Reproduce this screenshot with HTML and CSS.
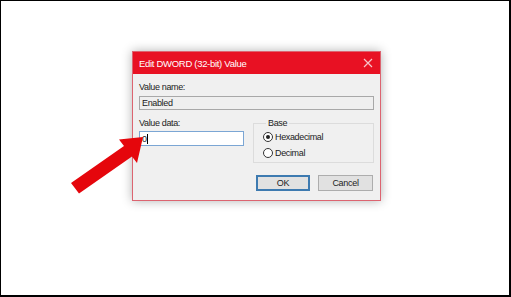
FILE: index.html
```html
<!DOCTYPE html>
<html>

<head>
    <title>Edit DWORD</title>
    <link rel="stylesheet" href="styles.css">
</head>

<body>
    <div id="frame">
        <div class="dialog">
            <div class="titleBar">
                <span class="title">Edit DWORD (32-bit) Value</span>
                <svg class="closeIcon" width="10" height="10" viewBox="0 0 10 10">
                    <path d="M1 1 L9 9 M9 1 L1 9" stroke="#f7c4c9" stroke-width="1.2" fill="none" />
                </svg>
            </div>
            <div class="dialogBody">
                <div class="label">Value name:</div>
                <div class="field readonly">Enabled</div>
                <div class="row">
                    <div class="dataCol">
                        <div class="label">Value data:</div>
                        <div class="field active">0<span class="caret"></span></div>
                    </div>
                    <fieldset class="baseGroup">
                        <legend>Base</legend>
                        <div class="radioRow"><span class="radio on"></span>Hexadecimal</div>
                        <div class="radioRow"><span class="radio"></span>Decimal</div>
                    </fieldset>
                </div>
                <div class="buttons">
                    <button class="btn default">OK</button>
                    <button class="btn">Cancel</button>
                </div>
            </div>
        </div>

        <!-- red pointer over the dialog -->
        <svg class="arrow" width="511" height="297" viewBox="0 0 511 297">
            <polygon points="143,137 119,139.5 124,146.1 71,183 79,193.5 132,156.4 137,163" fill="#e5060c" />
        </svg>
    </div>
</body>

</html>
```

FILE: styles.css
```css
body {
    margin: 0;
    padding: 0;
    background: #fff;
    font-family: "Liberation Sans", Arial, sans-serif;
}

#frame {
    position: relative;
    width: 511px;
    height: 297px;
    box-sizing: border-box;
    border-style: solid;
    border-color: #000;
    border-width: 1px 2px 2px 1px;
    padding: 50px 0 0 131px;
}

.dialog {
    width: 249px;
    box-sizing: border-box;
    border: 1px solid #dc6470;
    background: #f0f0f0;
    box-shadow: 0 0 10px rgba(0, 0, 0, 0.3);
}

.titleBar {
    height: 22px;
    background: #e81123;
    display: flex;
    align-items: center;
    justify-content: space-between;
    padding: 0 7px 0 6px;
}

.title {
    color: #fff;
    font-size: 9.5px;
    letter-spacing: -0.3px;
}

.closeIcon {
    display: block;
}

.dialogBody {
    padding: 7px 6px 9px 6px;
    font-size: 9px;
    letter-spacing: -0.35px;
    color: #222;
}

.label {
    height: 12px;
    line-height: 12px;
}

.field {
    box-sizing: border-box;
    line-height: 12px;
    padding-left: 2px;
    display: flex;
    align-items: center;
}

.field.readonly {
    margin-top: 3px;
    height: 14px;
    border: 1px solid #a8a8a8;
    background: #efefef;
}

.field.active {
    margin-top: 2px;
    height: 15px;
    border: 1px solid #7ba6d4;
    background: #fff;
}

.caret {
    width: 1px;
    height: 10px;
    background: #000;
}

.row {
    display: flex;
    gap: 9px;
    margin-top: 7px;
}

.dataCol {
    width: 105px;
}

.baseGroup {
    width: 121px;
    box-sizing: border-box;
    margin: 0;
    padding: 0 0 1px 9px;
    border: 1px solid #dcdcdc;
}

.baseGroup legend {
    padding: 0 2px;
    margin-left: 3px;
    height: 12px;
    line-height: 12px;
}

.radioRow {
    height: 16px;
    display: flex;
    align-items: center;
    gap: 2px;
}

.radio {
    width: 10px;
    height: 10px;
    box-sizing: border-box;
    border: 1px solid #333;
    border-radius: 50%;
    display: flex;
    align-items: center;
    justify-content: center;
    background: #fff;
}

.radio.on::after {
    content: "";
    width: 4px;
    height: 4px;
    border-radius: 50%;
    background: #222;
}

.buttons {
    display: flex;
    justify-content: flex-end;
    gap: 8px;
    margin-top: 12px;
    padding-right: 1px;
}

.btn {
    width: 55px;
    height: 16px;
    box-sizing: border-box;
    border: 1px solid #adadad;
    background: #e1e1e1;
    font-family: "Liberation Sans", Arial, sans-serif;
    font-size: 9px;
    letter-spacing: -0.3px;
    color: #222;
    padding: 0;
}

.btn.default {
    width: 54px;
    border: 2px solid #3d7ab0;
}

.arrow {
    position: absolute;
    left: -1px;
    top: -1px;
    pointer-events: none;
}
```
